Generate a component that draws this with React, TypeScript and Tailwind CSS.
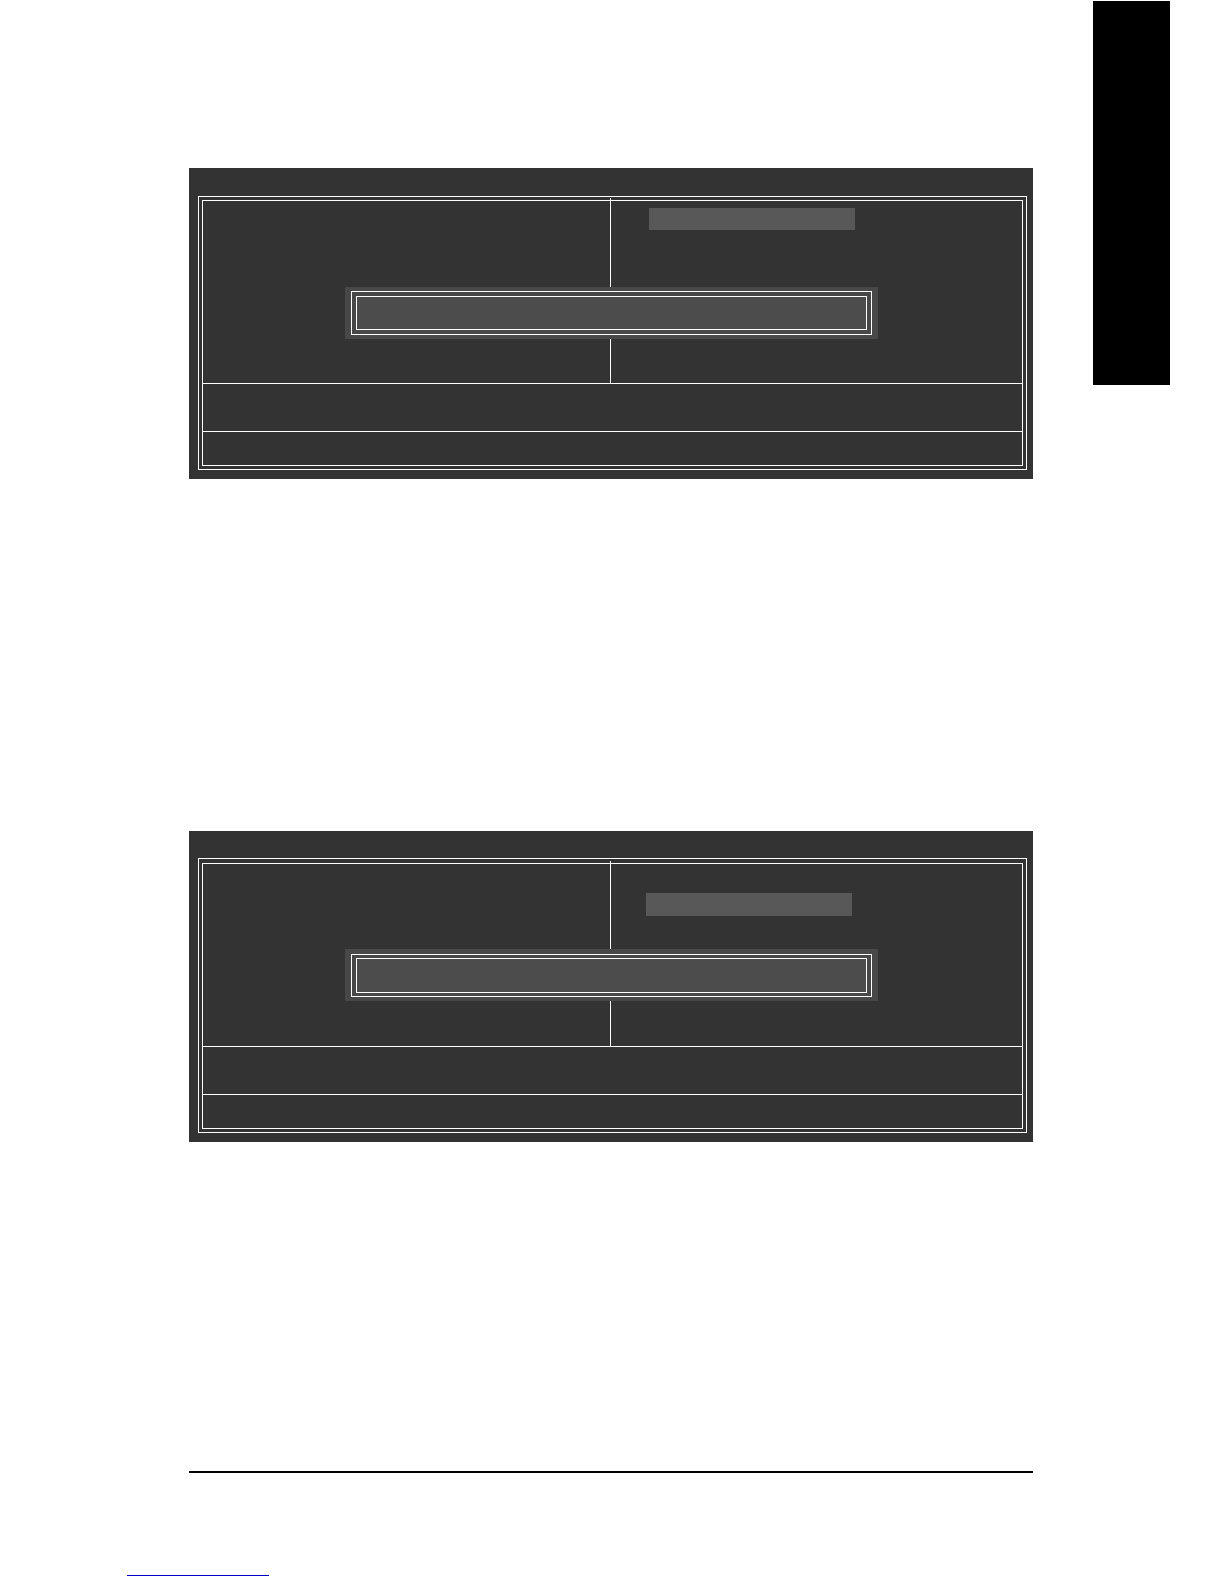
import clsx from "clsx";

interface PanelStyle {
  top: string;
  frame: string;
  selected: string;
  dialog: string;
  dialogFrame: string;
  dialogBody: string;
}

const panels: PanelStyle[] = [
  {
    top: "pt-7",
    frame: "pt-[3px]",
    selected: "mt-[10px] ml-[38px] h-[22px]",
    dialog: "top-[86px] pt-1",
    dialogFrame: "py-1",
    dialogBody: "h-[34px]",
  },
  {
    top: "pt-[27px]",
    frame: "pt-1",
    selected: "mt-8 ml-[35px] h-[23px]",
    dialog: "top-[85px] pt-[5px]",
    dialogFrame: "py-[3px]",
    dialogBody: "h-[35px]",
  },
];

function Dialog({ panel }: { panel: PanelStyle }) {
  return (
    <div className={clsx("absolute right-36 left-[142px] bg-[#484848] px-[6px] pb-1", panel.dialog)}>
      <div className={clsx("border border-white px-1", panel.dialogFrame)}>
        <div className={clsx("border border-white bg-[#4c4c4c]", panel.dialogBody)} />
      </div>
    </div>
  );
}

function SetupPanel({ panel }: { panel: PanelStyle }) {
  return (
    <section className={clsx("bg-[#333333] pr-[6px] pb-[9px] pl-[9px]", panel.top)}>
      <div className={clsx("border border-white px-[3px] pb-[3px]", panel.frame)}>
        <div className="border border-white">
          <div className="relative grid h-[183px] grid-cols-[407fr_412fr] border-b border-white">
            <div />
            {/* the divider runs up into the gap of the double frame */}
            <div className="-mt-[3px] border-l border-white">
              <div className={clsx("w-[206px] bg-[#585858]", panel.selected)} />
            </div>
            <Dialog panel={panel} />
          </div>
          <div className="h-12 border-b border-white" />
          <div className="h-[33px]" />
        </div>
      </div>
    </section>
  );
}

export default function App() {
  return (
    <div className="flex min-h-screen flex-col bg-white font-['Liberation_Sans',sans-serif]">
      <div className="flex items-start gap-15 pr-[54px] pl-[189px]">
        <main className="flex-1 pt-42">
          <div className="flex flex-col gap-88">
            {panels.map((panel, i) => (
              <SetupPanel key={i} panel={panel} />
            ))}
          </div>
          <hr className="mt-[329px] h-0.5 border-0 bg-black" />
        </main>
        <aside className="mt-px h-96 w-[77px] bg-black" />
      </div>

      <footer className="pt-[102px] pb-2 pl-[127px]">
        <a href="#" aria-label="Home" className="block w-[142px] border-b border-[#0000c0]" />
      </footer>
    </div>
  );
}
